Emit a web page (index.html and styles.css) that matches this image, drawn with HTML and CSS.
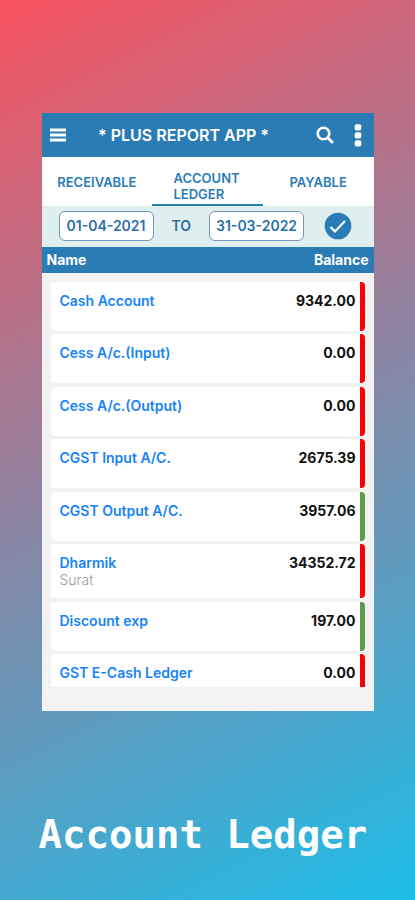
FILE: index.html
```html
<!DOCTYPE html>
<html lang="en">
<head>
<meta charset="utf-8">
<meta name="viewport" content="width=device-width, initial-scale=1">
<title>Account Ledger</title>
<link rel="stylesheet" href="styles.css">
</head>
<body>
<main class="app">
  <header class="bar">
    <button class="icon-button" type="button" aria-label="Menu">
      <svg width="16" height="14" viewBox="0 0 16 14"><path d="M0 2h16M0 7h16M0 12h16" stroke="currentColor" stroke-width="2.8"/></svg>
    </button>
    <h1 class="bar-title">* PLUS REPORT APP *</h1>
    <button class="icon-button" type="button" aria-label="Search">
      <svg width="18" height="18" viewBox="0 0 18 18" fill="none" stroke="currentColor"><circle cx="7.5" cy="7.5" r="5.8" stroke-width="2.6"/><path d="M11.8 11.8l4.2 4.2" stroke-width="3" stroke-linecap="round"/></svg>
    </button>
    <button class="icon-button" type="button" aria-label="More options">
      <svg width="8" height="23" viewBox="0 0 8 23" fill="currentColor"><rect x=".7" y=".3" width="6.6" height="6.2" rx="1.8"/><rect x=".7" y="8.3" width="6.6" height="6.2" rx="1.8"/><rect x=".7" y="16.3" width="6.6" height="6.2" rx="1.8"/></svg>
    </button>
  </header>
  <nav class="tabs">
    <a class="tab" href="#receivable">RECEIVABLE</a>
    <a class="tab tab-active" href="#ledger" aria-current="page"><span class="tab-label">ACCOUNT LEDGER</span></a>
    <a class="tab" href="#payable">PAYABLE</a>
  </nav>
  <form class="range">
    <input class="date" type="text" aria-label="From date" value="01-04-2021">
    <span class="to">TO</span>
    <input class="date" type="text" aria-label="To date" value="31-03-2022">
    <button class="apply" type="button" aria-label="Apply">
      <svg width="28" height="28" viewBox="0 0 28 28"><circle cx="14" cy="14" r="13.3" fill="#2b7cb5"/><path d="M6.5 15l4.5 4.5L21 9" fill="none" stroke="#fff" stroke-width="2.2"/></svg>
    </button>
  </form>
  <table class="ledger">
    <thead>
      <tr><th scope="col">Name</th><th scope="col">Balance</th></tr>
    </thead>
    <tbody>
      <tr class="debit"><td>Cash Account</td><td>9342.00</td></tr>
      <tr class="debit"><td>Cess A/c.(Input)</td><td>0.00</td></tr>
      <tr class="debit"><td>Cess A/c.(Output)</td><td>0.00</td></tr>
      <tr class="debit"><td>CGST Input A/C.</td><td>2675.39</td></tr>
      <tr class="credit"><td>CGST Output A/C.</td><td>3957.06</td></tr>
      <tr class="debit"><td>Dharmik<small>Surat</small></td><td>34352.72</td></tr>
      <tr class="credit"><td>Discount exp</td><td>197.00</td></tr>
      <tr class="debit cut"><td>GST E-Cash Ledger</td><td>0.00</td></tr>
    </tbody>
  </table>
</main>
<h2 class="caption">Account Ledger</h2>
</body>
</html>
```
FILE: styles.css
```css
* { box-sizing: border-box; }

body {
  margin: 0;
  min-height: 100vh;
  padding: 113px 10% 0;
  background: linear-gradient(154deg, #f7525f 0%, #8b86a4 49%, #1cbde8 100%);
  font-family: Inter, "Liberation Sans", sans-serif;
  font-size: 14px;
  line-height: 16px;
}

.app { background: #f2f2f2; padding-bottom: 24px; }

.bar {
  display: flex;
  align-items: center;
  gap: 20px;
  height: 44px;
  padding: 0 12px 0 8px;
  background: #2b7cb5;
  color: #fff;
}

.bar-title {
  flex: 1;
  margin: 0;
  padding-right: 14px;
  text-align: center;
  font-size: 16px;
  font-weight: 600;
  white-space: nowrap;
}

.icon-button, .apply {
  display: flex;
  padding: 0;
  border: 0;
  background: none;
  color: inherit;
}

.tabs {
  display: grid;
  grid-template-columns: repeat(3, 1fr);
  height: 49px;
  background: #fff;
}

.tab {
  display: flex;
  align-items: center;
  justify-content: center;
  padding-top: 2px;
  border-bottom: 2px solid transparent;
  color: #2b7cb5;
  font-size: 13px;
  font-weight: 600;
  text-decoration: none;
}

.tab-active { border-color: #2b7cb5; padding-top: 10px; }
.tab-label { width: 68px; }

.range {
  display: flex;
  align-items: center;
  gap: 18px;
  height: 41px;
  padding: 0 22px 2px 17px;
  background: #dfeeef;
  color: #2b6fa6;
  font-weight: 600;
}

.date {
  width: 95px;
  height: 30px;
  padding: 0;
  border: 1px solid #7296bd;
  border-radius: 6px;
  background: #fff;
  color: inherit;
  font: inherit;
  text-align: center;
}

.apply { margin-left: auto; }

.ledger, .ledger thead { display: block; }
.ledger tr { display: flex; justify-content: space-between; }
.ledger th, .ledger td { padding: 0; }

.ledger thead tr {
  height: 26px;
  padding: 5px;
  background: #2b7cb5;
  color: #fff;
}

.ledger tbody {
  display: flex;
  flex-direction: column;
  justify-content: space-between;
  min-height: 414px;
  padding: 9px 9px 0;
}

.ledger tbody tr {
  min-height: 49px;
  padding: 11px 4px 9px 9px;
  border-right: 5px solid #fb0007;
  border-radius: 4px;
  background: #fff;
  font-weight: 600;
}

.ledger tbody .credit { border-color: #5e9c4c; }
.ledger tbody .cut { min-height: 33px; padding-bottom: 6px; border-bottom-left-radius: 0; border-bottom-right-radius: 0; }
.ledger td:first-child { color: #1684f8; }
.ledger td:last-child { color: #111; font-weight: 700; }
.ledger small { display: block; color: #999; font-size: 14px; font-weight: 300; line-height: 18px; }

.caption {
  margin: 102px 0 0 -3px;
  color: #fff;
  font: bold 39px/44px "DejaVu Sans Mono", monospace;
  white-space: nowrap;
}
```
